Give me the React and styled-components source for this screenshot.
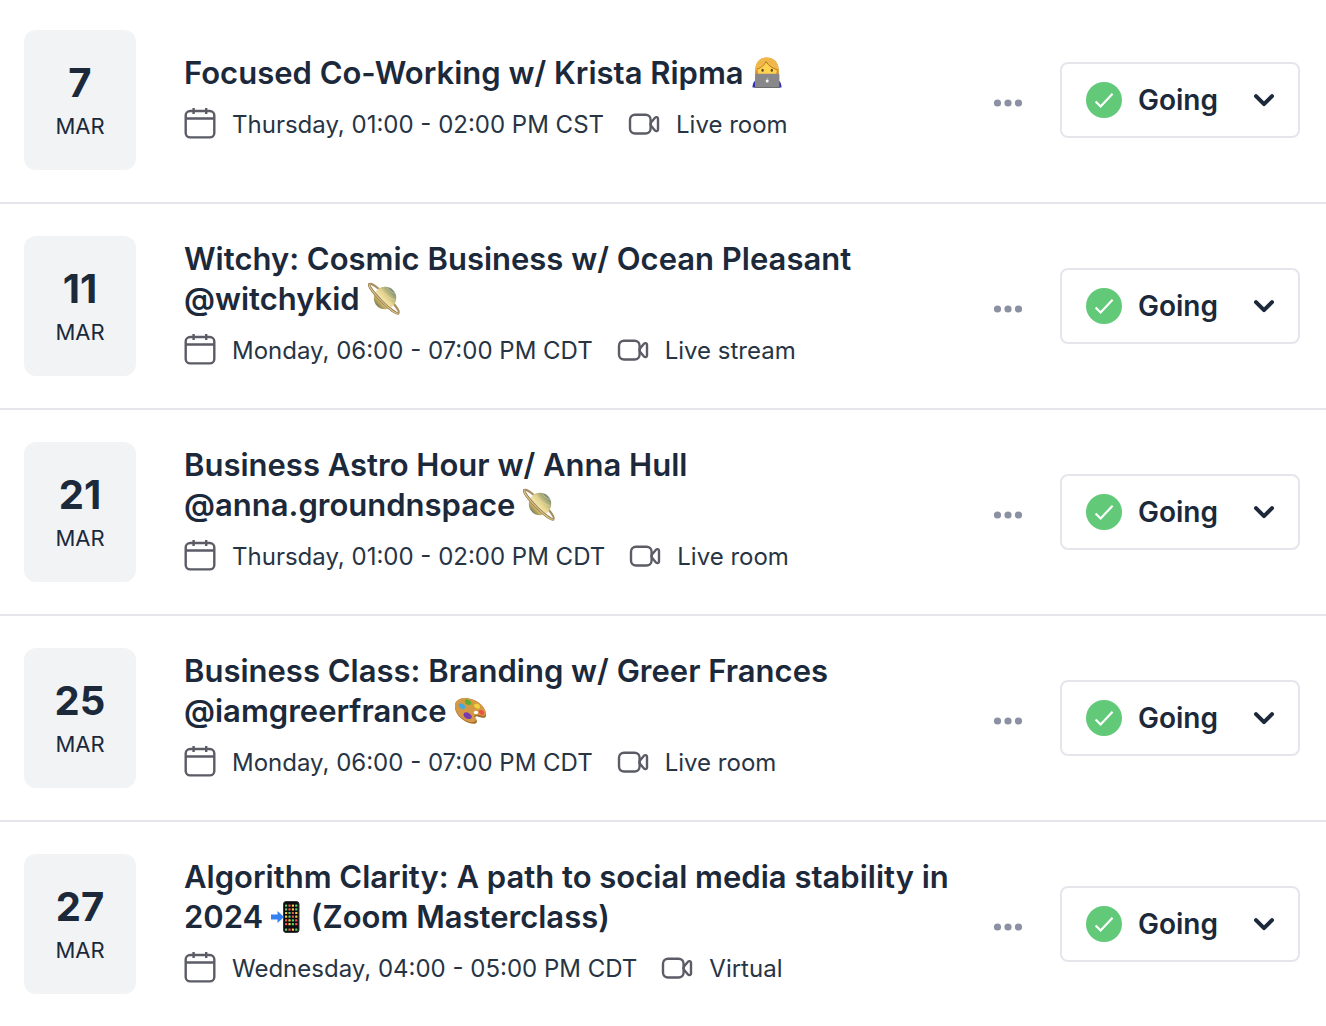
import React from "react";
import styled, { createGlobalStyle } from "styled-components";

const GlobalStyle = createGlobalStyle`
  * {
    box-sizing: border-box;
  }
  body {
    margin: 0;
    background: #ffffff;
    color: #1c293a;
    font-family: Inter, "Liberation Sans", sans-serif;
  }
`;

const List = styled.ul`
  margin: 0;
  padding: 0;
  list-style: none;
`;

const Row = styled.li`
  display: flex;
  align-items: center;
  padding: 32px 26px 32px 24px;
  border-bottom: 2px solid #e4e6eb;
  &:first-child {
    padding-top: 30px;
  }
  &:last-child {
    border-bottom: none;
  }
`;

const DateBox = styled.time`
  flex-shrink: 0;
  width: 112px;
  height: 140px;
  padding-top: 28px;
  border-radius: 12px;
  background: #f1f3f5;
  text-align: center;
`;

const Day = styled.div`
  font-size: 40px;
  font-weight: 700;
  line-height: 50px;
`;

const Month = styled.div`
  font-size: 22px;
  line-height: 36px;
`;

const Info = styled.div`
  flex: 1;
  min-width: 0;
  padding: 0 24px 2px 48px;
`;

const Title = styled.h2`
  margin: 0;
  font-size: 31px;
  font-weight: 600;
  line-height: 40px;
`;

const Meta = styled.div`
  display: flex;
  flex-wrap: wrap;
  column-gap: 24px;
  margin-top: 12px;
`;

const MetaItem = styled.span`
  display: flex;
  align-items: center;
  gap: 16px;
  font-size: 24px;
  line-height: 40px;
  color: #273444;
`;

const Icon = styled.svg`
  flex-shrink: 0;
  width: 32px;
  height: 36px;
  fill: none;
  stroke: #5b5c66;
  stroke-width: 2.4;
  stroke-linejoin: round;
`;

const EmojiSvg = styled.svg`
  width: 32px;
  height: 32px;
  overflow: visible;
  vertical-align: -5px;
`;

const MoreButton = styled.button`
  flex-shrink: 0;
  width: 32px;
  height: 40px;
  margin-right: 36px;
  padding: 6px 0 0;
  border: none;
  background: none;
  cursor: pointer;
  svg {
    display: block;
    fill: #8b91a3;
  }
`;

const Status = styled.label`
  flex-shrink: 0;
  display: flex;
  align-items: center;
  width: 240px;
  height: 76px;
  padding: 0 24px;
  border: 2px solid #e4e6eb;
  border-radius: 8px;
  cursor: pointer;
`;

const StatusSelect = styled.select`
  flex: 1;
  min-width: 0;
  height: 72px;
  margin-left: 16px;
  padding: 0;
  appearance: none;
  border: none;
  outline: none;
  background: none;
  color: #1c293a;
  font-family: inherit;
  font-size: 28px;
  font-weight: 600;
  cursor: pointer;
`;

const CalendarIcon = () => (
  <Icon viewBox="0 0 32 36" aria-hidden="true">
    <rect x="1.700" y="4" width="28.600" height="26.400" rx="4.500" />
    <path d="M9.600 1v6M22.200 1v6M1.700 11.500h28.600" />
  </Icon>
);

const VideoIcon = () => (
  <Icon viewBox="0 0 32 36" aria-hidden="true">
    <rect x="2" y="7.700" width="20.600" height="18.800" rx="5" />
    <path d="M23 15.500l4-4.700c1-1.200 3-.8 3 .9v10.800c0 1.700-2 2.100-3 .9l-4-4.700c-.9-1.200-.9-2 0-3.200z" />
  </Icon>
);

const CheckIcon = () => (
  <svg width="36" height="36" viewBox="0 0 36 36" aria-hidden="true">
    <circle cx="18" cy="18" r="18" fill="#62c979" />
    <path d="M9.600 19.500l5 5L26.600 11.800" fill="none" stroke="#fff" strokeWidth="2.200" />
  </svg>
);

const ChevronIcon = () => (
  <svg width="20" height="14" viewBox="0 0 20 14" pointerEvents="none" aria-hidden="true">
    <path
      d="M2 3.200l8 8 8-8"
      fill="none"
      stroke="#1c293a"
      strokeWidth="4"
      strokeLinecap="round"
      strokeLinejoin="round"
    />
  </svg>
);

const Technologist = () => (
  <EmojiSvg viewBox="1 0 32 32" role="img" aria-label="Woman technologist">
    <path d="M2.500 30.500c0-4.500 2-7.500 5.500-8.500h18c3.500 1 5.500 4 5.500 8.500z" fill="#3232ae" />
    <path d="M5.500 20C3.500 8 8.500.5 17 .5S30.500 8 28.500 20z" fill="#d9952f" />
    <ellipse cx="17.200" cy="13.500" rx="9.600" ry="10" fill="#ffd350" />
    <path d="M5.500 14C5 5 10 .5 17 .5c-1 5-5 9-9.500 11z" fill="#f0b84a" />
    <path d="M15 .8c7-1 13.500 3.500 13.600 12.200-4.600-1.500-10.600-4-13.100-8.500z" fill="#f0b84a" />
    <path d="M7.500 12c4-1.500 7-4 8.500-7.500 2.500 4.500 7 7 11.500 8.300" fill="none" stroke="#b77424" />
    <ellipse cx="12.600" cy="13.300" rx="1.100" ry="1.500" fill="#5a3d1c" />
    <ellipse cx="21.800" cy="13.300" rx="1.100" ry="1.500" fill="#5a3d1c" />
    <rect x="5" y="16.800" width="24.400" height="13.700" rx="1" fill="#88888b" />
    <path d="M4.500 30.500h25.400" stroke="#6c6c70" />
    <circle cx="17.200" cy="24" r="1.500" fill="#f3f3f3" />
    <path d="M17.200 22.300l1-1.300" stroke="#f3f3f3" strokeWidth=".7" />
  </EmojiSvg>
);

const Saturn = () => (
  <EmojiSvg viewBox="1 0 32 32" role="img" aria-label="Ringed planet">
    <defs>
      <linearGradient id="saturn" x1=".95" y1=".15" x2=".1" y2=".9">
        <stop offset="0" stopColor="#58776e" />
        <stop offset=".22" stopColor="#a9aa7a" />
        <stop offset=".45" stopColor="#e6d58d" />
        <stop offset=".6" stopColor="#f0e3ab" />
        <stop offset=".8" stopColor="#bba65b" />
        <stop offset="1" stopColor="#5e6f5c" />
      </linearGradient>
    </defs>
    <g transform="rotate(45 17 15.500)">
      <ellipse cx="17" cy="15.500" rx="20.500" ry="3.600" fill="none" stroke="#a58d5c" strokeWidth="2" />
    </g>
    <circle cx="18" cy="15" r="11.200" fill="url(#saturn)" />
    <path d="M14 6c4 6 8 9 14 11M20 4.500c2 3 5 5 8 6" stroke="#f0e4b5" strokeWidth=".8" fill="none" opacity=".6" />
    <g transform="rotate(45 17 15.500)" fill="none">
      <path d="M-3.500 15.500c0 2 9 3.600 20.500 3.600s20.500-1.600 20.500-3.600" stroke="#927a4c" strokeWidth="2.600" />
      <path d="M-3.500 15.500c0 2 9 3.600 20.500 3.600s20.500-1.600 20.500-3.600" stroke="#dcc48b" strokeWidth="1.100" />
    </g>
  </EmojiSvg>
);

const Palette = () => (
  <EmojiSvg viewBox="1 0 32 32" role="img" aria-label="Artist palette">
    <path
      d="M2 10C3 4 10 2 18 4c8 2 14 8 15 15 1 5-4 4-7 3-3-2-5 0-3 2 3 4-1 6-7 4C8 25 1 18 2 10z"
      fill="#a36b2d"
    />
    <path
      d="M2 9C4 3 11 2 18 4c8 2 14 8 15 14 0 4-4 3-7 2-4-1-6 1-4 3 3 3-1 5-6 4C8 24 1 17 2 9z"
      fill="#d49945"
    />
    <ellipse cx="23" cy="17.500" rx="2.200" ry="1.800" fill="#fff" />
    <path d="M6 9c2-1 5 0 6 2s-1 4-3 3-4-3-3-5z" fill="#43a9e2" />
    <path d="M12 5c2-1 5 0 6 2s0 3-2 3-5-2-4-5z" fill="#57ae32" />
    <path d="M22 9c3-1 5 1 5 3s-2 2-4 1-3-3-1-4z" fill="#f0d33f" />
    <path d="M27 15c3 0 5 2 4 4s-4 0-5-1 0-3 1-3z" fill="#ed5146" />
    <path d="M11 18c3-2 5 0 7 2s0 4-2 4-7-2-5-6z" fill="#783aae" />
  </EmojiSvg>
);

const appColors = ["#5dce6c", "#f5f5f5", "#ee5751", "#49a7f5", "#f6ca43", "#df50dc"];

const Phone = () => (
  <EmojiSvg viewBox="1 0 32 32" role="img" aria-label="Mobile phone with arrow">
    <rect x="13.500" y="0.500" width="15.500" height="31" rx="2.500" fill="#0c0d10" stroke="#34363b" />
    {[0, 1, 2, 3, 4, 5, 6].map((row) =>
      [0, 1, 2, 3].map((col) => (
        <rect
          key={`${row}-${col}`}
          x={15 + col * 3.4}
          y={row === 6 ? 27.5 : 3.5 + row * 3.7}
          width="2.200"
          height="2.200"
          rx=".5"
          fill={appColors[(row * 5 + col * 2 + (row % 2)) % 6]}
        />
      ))
    )}
    <path d="M1 13.500h6.500V10l6.500 6-6.500 6v-3.500H1z" fill="#3681ef" />
  </EmojiSvg>
);

const events = [
  {
    day: "7",
    date: "2024-03-07",
    title: <>Focused Co-Working w/ Krista Ripma <Technologist /></>,
    time: "Thursday, 01:00 - 02:00 PM CST",
    place: "Live room",
  },
  {
    day: "11",
    date: "2024-03-11",
    title: <>Witchy: Cosmic Business w/ Ocean Pleasant @witchykid <Saturn /></>,
    time: "Monday, 06:00 - 07:00 PM CDT",
    place: "Live stream",
  },
  {
    day: "21",
    date: "2024-03-21",
    title: <>Business Astro Hour w/ Anna Hull @anna.groundnspace <Saturn /></>,
    time: "Thursday, 01:00 - 02:00 PM CDT",
    place: "Live room",
  },
  {
    day: "25",
    date: "2024-03-25",
    title: <>Business Class: Branding w/ Greer Frances @iamgreerfrance <Palette /></>,
    time: "Monday, 06:00 - 07:00 PM CDT",
    place: "Live room",
  },
  {
    day: "27",
    date: "2024-03-27",
    title: <>Algorithm Clarity: A path to social media stability in 2024 <Phone /> (Zoom Masterclass)</>,
    time: "Wednesday, 04:00 - 05:00 PM CDT",
    place: "Virtual",
  },
];

const EventRow = ({ event }) => (
  <Row>
    <DateBox dateTime={event.date}>
      <Day>{event.day}</Day>
      <Month>MAR</Month>
    </DateBox>
    <Info>
      <Title>{event.title}</Title>
      <Meta>
        <MetaItem>
          <CalendarIcon />
          {event.time}
        </MetaItem>
        <MetaItem>
          <VideoIcon />
          {event.place}
        </MetaItem>
      </Meta>
    </Info>
    <MoreButton type="button" aria-label="More options">
      <svg width="32" height="8" viewBox="0 0 32 8" aria-hidden="true">
        <circle cx="5.500" cy="4" r="3.600" />
        <circle cx="16" cy="4" r="3.600" />
        <circle cx="26.500" cy="4" r="3.600" />
      </svg>
    </MoreButton>
    <Status>
      <CheckIcon />
      <StatusSelect aria-label="Attendance" defaultValue="Going">
        <option>Going</option>
      </StatusSelect>
      <ChevronIcon />
    </Status>
  </Row>
);

const App = () => {
  return (
    <>
      <GlobalStyle />
      <List>
        {events.map((event) => (
          <EventRow key={event.date} event={event} />
        ))}
      </List>
    </>
  );
};

export default App;
